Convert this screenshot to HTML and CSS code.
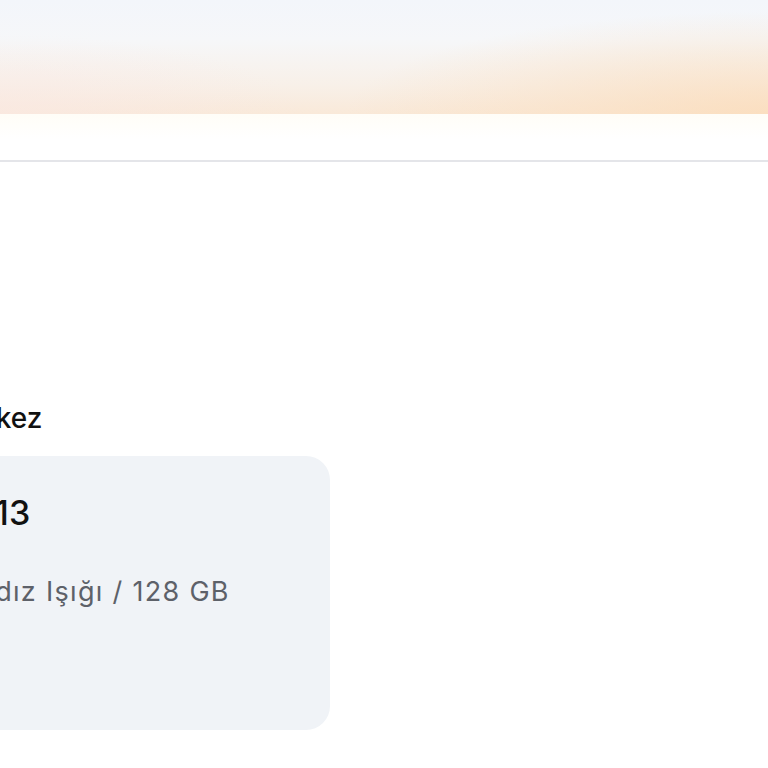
FILE: index.html
```html
<!DOCTYPE html>
<html lang="tr">
<head>
<meta charset="utf-8">
<title>Destek Merkez</title>
<link rel="stylesheet" href="styles.css">
</head>
<body>
<header class="hero"></header>
<nav class="subbar"></nav>
<main class="page">
  <section class="orders">
    <h2 class="section-title">Destek Merkez</h2>
    <article class="product-card">
      <h3 class="product-name">iPhone 13</h3>
      <p class="product-variant">Renk: Yıldız Işığı / 128 GB</p>
    </article>
  </section>
</main>
</body>
</html>
```
FILE: styles.css
```css
html, body {
  margin: 0;
  padding: 0;
  background: #ffffff;
  overflow: hidden;
}
body {
  font-family: "Inter", "Noto Sans", sans-serif;
  color: #111111;
}
.hero {
  height: 114px;
  background:
    radial-gradient(ellipse 55% 90% at 100% 100%, rgba(251, 220, 186, 0.8), rgba(251, 220, 186, 0) 100%),
    radial-gradient(ellipse 40% 70% at 0% 100%, rgba(250, 232, 228, 0.6), rgba(250, 232, 228, 0) 100%),
    linear-gradient(180deg, #f3f6fb 0%, #f6f7f9 35%, #f8f0e8 75%, #f9e9d9 100%);
}
.subbar {
  height: 46px;
  background: linear-gradient(180deg, #fffdf7 0%, #ffffff 55%);
  border-bottom: 2px solid #e4e5e9;
}
.page {
  padding-top: 238px;
  margin-left: -158px;
}
.section-title {
  margin: 0 0 20px;
  font-size: 28px;
  line-height: 36px;
  font-weight: 500;
  white-space: nowrap;
}
.product-card {
  box-sizing: border-box;
  width: 488px;
  min-height: 274px;
  padding: 36px 32px;
  border-radius: 24px;
  background: #f0f3f7;
}
.product-name {
  margin: 0;
  font-size: 34px;
  line-height: 42px;
  font-weight: 500;
  white-space: nowrap;
}
.product-variant {
  margin: 40px 0 0;
  font-size: 27px;
  line-height: 36px;
  font-weight: 400;
  letter-spacing: 1.3px;
  color: #5d6169;
  white-space: nowrap;
}
```
